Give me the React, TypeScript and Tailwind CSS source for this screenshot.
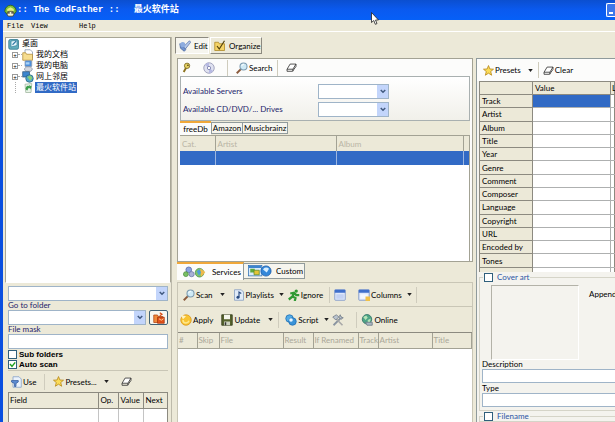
import type { ReactNode } from "react"
import { clsx } from "clsx"

const cjk = "font-['Liberation_Sans','Noto_Sans_CJK_SC',sans-serif]"

/* ---------- icons ---------- */

const Icon = ({ children, className = "size-3" }: { children: ReactNode; className?: string }) => (
  <svg viewBox="0 0 16 16" className={clsx("shrink-0", className)} aria-hidden="true">
    {children}
  </svg>
)

const StarIcon = () => (
  <Icon className="size-[11px]">
    <path
      d="M8 .8l2 5 5.3.3-4.1 3.4 1.4 5.4L8 11.9l-4.6 3 1.4-5.4L.7 6.1 6 5.8z"
      fill="#fbdc58"
      stroke="#b98a1c"
      strokeWidth="1.2"
    />
  </Icon>
)

const EraserIcon = () => (
  <Icon className="size-[11px]">
    <path d="M6 3h8.5L10 10.5H1.5z" fill="#fff" stroke="#333" strokeWidth="1.2" />
    <path d="M1.5 10.5v3H9.5l5-7V3M10 10.5v3" fill="none" stroke="#333" strokeWidth="1.2" />
  </Icon>
)

const SearchIcon = () => (
  <Icon>
    <path d="M1 15l5.5-5.5" stroke="#8a5a3c" strokeWidth="2.6" />
    <circle cx="10" cy="6" r="4.7" fill="#cfeaf6" stroke="#7c9bb0" strokeWidth="1.4" />
    <path d="M7.5 5.5a3 3 0 013-2.5" stroke="#fff" fill="none" strokeWidth="1.3" />
  </Icon>
)

const KeyIcon = () => (
  <Icon className="h-[11px] w-[9px]">
    <path d="M3 16l5-9" stroke="#8d7420" strokeWidth="3.4" />
    <circle cx="9" cy="5" r="4.8" fill="#e3cf62" stroke="#6f5d1d" strokeWidth="1.3" />
    <circle cx="10.5" cy="4" r="1.5" fill="#5d4c14" />
  </Icon>
)

const DiscIcon = () => (
  <Icon>
    <circle cx="8" cy="8" r="7" fill="#dfe1f0" stroke="#8d8fae" />
    <path d="M8 8L2.5 4A7 7 0 018 1zM8 8l5.6 4A7 7 0 018 15z" fill="#b6b9e2" />
    <circle cx="8" cy="8" r="2.2" fill="#fff" stroke="#6f73a4" />
  </Icon>
)

const PencilCheckIcon = () => (
  <Icon>
    <path d="M1 5l5 1 3 7-2 2-5-4z" fill="#6f93cf" stroke="#48659e" />
    <path d="M6 9l8-8 1.5 2-7 9z" fill="#b6c9ea" stroke="#5471a8" />
    <circle cx="5" cy="6" r="3.4" fill="#8dacdf" />
  </Icon>
)

const OrganizeIcon = () => (
  <Icon>
    <path d="M1 3h5l1 2h7v9H1z" fill="#f4d367" stroke="#a9831f" />
    <path d="M4 8l3 4 7-11" fill="none" stroke="#53420e" strokeWidth="1.6" />
  </Icon>
)

const AppIcon = () => (
  <Icon className="size-[13px]">
    <path d="M1 9a7 7.5 0 0114 0l-2 3H3z" fill="#7ec13c" stroke="#2d5e16" />
    <path d="M4 6l4-2 4 2v3H4z" fill="#e6ef7f" />
    <rect x="4" y="9" width="8" height="6" rx="2" fill="#f2f2d6" stroke="#433c1d" />
    <path d="M5 11h2m2 0h2" stroke="#222" strokeWidth="1.4" />
  </Icon>
)

const DesktopIcon = () => (
  <Icon>
    <rect x="1" y="2" width="13" height="13" rx="2" fill="#64aebd" stroke="#2c7388" />
    <path d="M4 4l8-1v7l-8 2z" fill="#e6f6fa" stroke="#3b87a0" />
    <path d="M6 9l5-5" stroke="#3178a4" strokeWidth="1.5" />
  </Icon>
)

const DocumentsIcon = () => (
  <Icon>
    <path d="M4 1h7l3 3v8H4z" fill="#fff" stroke="#8090a8" />
    <path d="M1 5h4l1 2h8v8H1z" fill="#f6dd90" stroke="#b08a33" />
  </Icon>
)

const ComputerIcon = () => (
  <Icon>
    <rect x="4" y="1" width="9" height="8" rx="1" fill="#4c8fdc" stroke="#8f99ac" />
    <path d="M5 3h5v3H5z" fill="#a8d2f8" />
    <path d="M3 12l3-3h5l3 3-2 3H5z" fill="#d3d7df" stroke="#8a90a0" />
  </Icon>
)

const NetworkIcon = () => (
  <Icon>
    <rect x="1" y="1" width="9" height="7" fill="#3d86cf" stroke="#31597d" />
    <circle cx="10" cy="10" r="5" fill="#4ea5c8" stroke="#27617f" />
    <path d="M7 8l4-2 3 3-3 4z" fill="#8ccf73" />
  </Icon>
)

const RecycleIcon = () => (
  <Icon>
    <path d="M4 3l9-1-1 12H5z" fill="#e9f3e8" stroke="#9db39c" />
    <path d="M6 11a3 3 0 014-5l-1-2 4 2-2 4-1-2a2 2 0 00-2 3z" fill="#3da04c" />
  </Icon>
)

const FolderGoIcon = () => (
  <Icon>
    <path d="M1 4h5l1 2h6v8H1z" fill="#f08a3c" stroke="#b2410f" />
    <path d="M6 7h9v8H6z" fill="#e2531c" stroke="#a3340c" />
    <path d="M9 1l3 2-3 2M10.500 9v4" fill="none" stroke="#d9480f" strokeWidth="1.6" />
    <path d="M8 9l3 2 3-2" fill="none" stroke="#ffd9a8" strokeWidth="1.200" />
  </Icon>
)

const FilterPageIcon = () => (
  <Icon>
    <path d="M4 1h8l3 3v11H4z" fill="#eaf2fc" stroke="#7e9cc6" />
    <path d="M2 6h9v2L8 10v4H6v-4L2 8z" fill="#5b8ad0" stroke="#375f9f" />
  </Icon>
)

const PlaylistIcon = () => (
  <Icon>
    <path d="M2 1h9l3 3v11H2z" fill="#e0ebf8" stroke="#7f98bd" />
    <path d="M8 11V4l3 2" fill="none" stroke="#27497f" strokeWidth="1.5" />
    <circle cx="6.6" cy="11" r="2" fill="#27497f" />
  </Icon>
)

const RunnerIcon = () => (
  <Icon>
    <circle cx="11" cy="2.8" r="2.2" fill="#2f9a33" />
    <path d="M3 6l5-1 3 3h4M8 5l-2 5 4 2-1 4M6 10l-5 4" fill="none" stroke="#2f9a33" strokeWidth="3" />
  </Icon>
)

const WindowIcon = ({ accent = false }: { accent?: boolean }) => (
  <Icon>
    <rect x="1" y="1" width="14" height="14" rx="1" fill="#dfe8fb" stroke="#6f8bc4" />
    <path d="M1 1h14v4H1z" fill="#3f6fcb" />
    <path d="M3 7h10v6H3z" fill={accent ? "#f4f8ff" : "#c3d2f4"} />
    {accent && <path d="M10 10h6v6h-6z" fill="#f1c148" />}
  </Icon>
)

const ApplyIcon = () => (
  <Icon>
    <circle cx="8" cy="8" r="7" fill="#f8c433" stroke="#d8941a" />
    <path d="M4 8a4 4 0 004 4 4.500 4.500 0 004-3" fill="none" stroke="#ffe88c" strokeWidth="2" />
    <path d="M1 1l7 2-4 4z" fill="#fff3c4" />
  </Icon>
)

const SaveIcon = () => (
  <Icon>
    <path d="M1 1h14v14H1z" fill="#56622d" stroke="#2e3616" />
    <path d="M4 1h8v6H4z" fill="#f5f6ec" />
    <path d="M4 10h8v5H4z" fill="#cdd2c0" />
    <path d="M5 11h2v4H5z" fill="#333" />
  </Icon>
)

const ScriptIcon = () => (
  <Icon>
    <circle cx="6" cy="6" r="5" fill="#52abe6" stroke="#1d6cb0" />
    <circle cx="10" cy="10" r="5" fill="#3a93d8" stroke="#1d6cb0" />
    <circle cx="8" cy="8" r="2.4" fill="#e9f6ff" />
  </Icon>
)

const ToolsIcon = () => (
  <Icon>
    <path d="M2 15L13 4" stroke="#8a94a0" strokeWidth="2.4" />
    <path d="M14 15L5 6" stroke="#a8a8a8" strokeWidth="2.2" />
    <path d="M1 4l5-3 3 3-4 4zM11 1l1 3 3 1-3 2-3-3z" fill="#b9c3cf" stroke="#6f7883" />
  </Icon>
)

const GlobeIcon = () => (
  <Icon>
    <circle cx="8" cy="7" r="6.3" fill="#4fa587" stroke="#2b6c62" />
    <path d="M3 4l4-2 2 3-3 3zM9 8l4-2-1 5-3 1z" fill="#b6e4b8" />
    <path d="M6 11h9v4H8z" fill="#a9b7c4" stroke="#66737f" />
  </Icon>
)

const ServicesIcon = () => (
  <svg viewBox="0 0 32 16" className="h-3 w-[23px] shrink-0" aria-hidden="true">
    <circle cx="8" cy="5" r="4" fill="#8aa2e0" stroke="#4f66a8" />
    <circle cx="4" cy="11" r="3.4" fill="#79bf64" stroke="#4a8b3e" />
    <circle cx="12" cy="11" r="3.6" fill="#a9b2d6" stroke="#6a75a6" />
    <circle cx="23" cy="9" r="6" fill="#7ec46a" stroke="#3f8845" />
    <path d="M24 3l7 5-6 7z" fill="#f0b94b" />
    <path d="M19 7l4-3 2 5-3 4z" fill="#4f9bd8" />
  </svg>
)

const CustomIcon = () => (
  <svg viewBox="0 0 32 16" className="h-3 w-6 shrink-0" aria-hidden="true">
    <rect x=".5" y=".5" width="18" height="14" fill="#d9ecfb" stroke="#2e6fb3" />
    <path d="M1 1h17v3H1z" fill="#3c84cf" />
    <path d="M3 5h6v5H3z" fill="#5daa3e" />
    <path d="M8 7h7v6H8z" fill="#e4c437" stroke="#5b8a26" />
    <circle cx="24" cy="8" r="6.8" fill="#3287da" stroke="#1a58a5" />
    <path d="M20 6a5 5 0 018-1l-3 5z" fill="#d5edff" />
  </svg>
)

/* ---------- small controls ---------- */

const Caret = ({ label }: { label: string }) => (
  <button type="button" aria-label={label} className="flex w-3 justify-center">
    <svg viewBox="0 0 6 4" className="h-[3px] w-[5px]" aria-hidden="true">
      <path d="M0 0h6L3 4z" fill="#222" />
    </svg>
  </button>
)

const Separator = () => <div className="h-4 w-px bg-[#cfccbd]" />

const ToolButton = ({ icon, label, text = true }: { icon: ReactNode; label: string; text?: boolean }) => (
  <button type="button" aria-label={label} className="flex items-center gap-px whitespace-nowrap">
    {icon}
    {text && label}
  </button>
)

const Combo = ({ id, label }: { id: string; label?: string }) => (
  <div className="relative flex h-[15px] flex-1 border border-[#9fb4c8] bg-white">
    <select id={id} aria-label={label} className="w-full appearance-none bg-transparent outline-none">
      <option></option>
    </select>
    <span className="pointer-events-none absolute inset-y-0 right-0 flex w-[11px] items-center justify-center bg-[#c3d5fb]">
      <svg viewBox="0 0 8 6" className="h-[5px] w-[6px]" aria-hidden="true">
        <path d="M1 1l3 3 3-3" fill="none" stroke="#41597f" strokeWidth="2" />
      </svg>
    </span>
  </div>
)

const Check = ({ id, checked = false }: { id: string; checked?: boolean }) => (
  <span className="relative flex size-[9px] shrink-0">
    <input
      id={id}
      type="checkbox"
      defaultChecked={checked}
      className="peer size-full appearance-none border border-[#2f5f7c] bg-white"
    />
    <svg
      viewBox="0 0 9 9"
      className="pointer-events-none absolute inset-0 hidden peer-checked:block"
      aria-hidden="true"
    >
      <path d="M2 4l2 2.4L7.2 2.4" fill="none" stroke="#21a121" strokeWidth="1.5" />
    </svg>
  </span>
)

/* ---------- left side ---------- */

const folders = [
  { name: "我的文档", icon: <DocumentsIcon /> },
  { name: "我的电脑", icon: <ComputerIcon /> },
  { name: "网上邻居", icon: <NetworkIcon /> },
]

const FolderTree = () => (
  <div className={clsx("h-[246px] shrink-0 border border-[#a8a696] border-b-white bg-white pl-[2px] text-[8px]", cjk)}>
    <div className="flex h-[11px] items-center gap-[2px]">
      <DesktopIcon />
      桌面
    </div>
    <ul className="pl-1">
      {folders.map((folder) => (
        <li key={folder.name} className="flex h-[11px] items-center">
          <button
            type="button"
            aria-label={`Expand ${folder.name}`}
            className="flex size-[6px] items-center justify-center border border-[#9a9a9a] text-[6px] leading-none"
          >
            +
          </button>
          <span className="w-1 border-t border-dotted border-[#aaa]" />
          <span className="flex items-center gap-[2px]">
            {folder.icon}
            {folder.name}
          </span>
        </li>
      ))}
      <li className="flex h-[11px] items-center">
        <span className="ml-[3px] h-[11px] w-[7px] border-l border-dotted border-[#aaa]" />
        <span className="flex items-center gap-px">
          <RecycleIcon />
          <span className="bg-[#316ac5] px-px leading-[11px] text-white">最火软件站</span>
        </span>
      </li>
    </ul>
  </div>
)

const FilterPanel = () => (
  <div className="flex flex-1 flex-col overflow-hidden px-[3px] pt-[3px]">
    <div className="flex">
      <Combo id="drive" label="Drive" />
    </div>
    <label htmlFor="goto" className="leading-[9px] text-[#1d1d6b]">
      Go to folder
    </label>
    <div className="flex gap-[3px]">
      <Combo id="goto" />
      <button
        type="button"
        aria-label="Open folder"
        className="flex h-[15px] w-[19px] items-center justify-center rounded-[2px] border border-[#3f6176] bg-[#f7f6f0]"
      >
        <FolderGoIcon />
      </button>
    </div>
    <label htmlFor="mask" className="leading-[9px] text-[#1d1d6b]">
      File mask
    </label>
    <input id="mask" className="h-[15px] shrink-0 border border-[#9fb4c8] bg-white outline-none" />
    <div className="flex flex-col gap-px pt-px font-['Liberation_Sans',sans-serif] text-[8px] font-bold">
      <span className="flex items-center gap-[2px]">
        <Check id="sub" />
        <label htmlFor="sub" className="leading-[9px]">
          Sub folders
        </label>
      </span>
      <span className="flex items-center gap-[2px]">
        <Check id="auto" checked />
        <label htmlFor="auto" className="leading-[9px]">
          Auto scan
        </label>
      </span>
    </div>
    <div className="mt-px flex h-[22px] shrink-0 items-center border-t border-[#c9c6b6] pl-[2px]">
      <ToolButton icon={<FilterPageIcon />} label="Use" />
      <div className="mr-2 ml-2">
        <Separator />
      </div>
      <ToolButton icon={<StarIcon />} label="Presets..." />
      <div className="mr-2 ml-1 flex items-center gap-1">
        <Caret label="Preset list" />
      </div>
      <ToolButton icon={<EraserIcon />} label="Clear filter" text={false} />
    </div>
    <div className="flex flex-1 flex-col border-x border-t border-[#8c8a80] bg-white">
      <table className="w-full table-fixed border-collapse text-left">
        <thead>
          <tr className="h-[15px] bg-[#ece9d8]">
            <th className="border-r border-b border-[#8c8a80] pl-px font-normal">Field</th>
            <th className="w-5 border-r border-b border-[#8c8a80] pl-[2px] font-normal">Op.</th>
            <th className="w-[25px] border-r border-b border-[#8c8a80] pl-[2px] font-normal">Value</th>
            <th className="w-6 border-b border-[#8c8a80] pl-[2px] font-normal">Next</th>
          </tr>
        </thead>
        <tbody>
          <tr className="h-4">
            <td className="border-r border-[#c4c4c4]"></td>
            <td className="border-r border-[#c4c4c4]"></td>
            <td className="border-r border-[#c4c4c4]"></td>
            <td></td>
          </tr>
        </tbody>
      </table>
    </div>
  </div>
)

/* ---------- middle ---------- */

const LookupPanel = () => (
  <div className="flex h-[204px] shrink-0 flex-col border border-[#a3a294] bg-[#fcfcfb] px-[2px]">
    <div className="flex h-[17px] shrink-0 items-center pl-[2px]">
      <ToolButton icon={<KeyIcon />} label="Connect" text={false} />
      <div className="ml-3 flex">
        <ToolButton icon={<DiscIcon />} label="Disc" text={false} />
      </div>
      <div className="mr-2 ml-3">
        <Separator />
      </div>
      <ToolButton icon={<SearchIcon />} label="Search" />
      <div className="mr-2 ml-1">
        <Separator />
      </div>
      <ToolButton icon={<EraserIcon />} label="Clear results" text={false} />
    </div>
    <div className="grid h-[45px] shrink-0 grid-cols-[135px_71px] content-center items-center gap-y-[3px] border border-[#a9b0b0] bg-linear-to-b from-white to-[#f1f0ea] pt-[3px] pl-[2px] text-[#1d1d6b]">
      <label htmlFor="servers">Available Servers</label>
      <Combo id="servers" />
      <label htmlFor="drives">Available CD/DVD/... Drives</label>
      <Combo id="drives" />
    </div>
    <div role="tablist" className="flex h-[14px] shrink-0 items-end bg-[#ece9d8]">
      <button role="tab" aria-selected="true" className="h-[14px] w-[31px] border-t-2 border-[#f0a83a] bg-[#fcfcfb]">
        freeDb
      </button>
      <button role="tab" aria-selected="false" className="mb-px h-3 w-8 border border-[#919b9c] bg-[#f6f5ee]">
        Amazon
      </button>
      <button
        role="tab"
        aria-selected="false"
        className="mb-px h-3 border border-l-0 border-[#919b9c] bg-[#f6f5ee] px-px"
      >
        Musicbrainz
      </button>
    </div>
    <div className="flex-1 border-t border-r border-[#a3a294] bg-white">
      <table className="w-full table-fixed border-collapse text-left text-[#b9b5a5]">
        <thead>
          <tr className="h-[15px] bg-[#ece9d8]">
            <th className="w-[35px] border-r border-[#a3a294] pl-[2px] font-normal">Cat.</th>
            <th className="w-[121px] border-r border-[#a3a294] pl-[2px] font-normal">Artist</th>
            <th className="border-r border-[#a3a294] pl-[2px] font-normal">Album</th>
            <th className="w-[6px]"></th>
          </tr>
        </thead>
        <tbody>
          <tr className="h-[14px] bg-[#316ac5]">
            <td className="border-r border-[#9db7e0]"></td>
            <td className="border-r border-[#9db7e0]"></td>
            <td className="border-r border-[#9db7e0]"></td>
            <td></td>
          </tr>
        </tbody>
      </table>
    </div>
  </div>
)

const fileColumns = [
  { name: "#", width: "w-[19px]" },
  { name: "Skip", width: "w-[22px]" },
  { name: "File", width: "w-16" },
  { name: "Result", width: "w-[30px]" },
  { name: "If Renamed", width: "w-[45px]" },
  { name: "Track", width: "w-5" },
  { name: "Artist", width: "w-[54px]" },
  { name: "Title", width: "" },
]

const ServicesPanel = () => (
  <div className="flex flex-1 flex-col overflow-hidden">
    <div role="tablist" className="flex h-5 shrink-0 items-start">
      <button
        role="tab"
        aria-selected="true"
        className="flex h-[18px] w-[67px] items-center gap-[6px] border-t-2 border-r border-[#919b9c] border-t-[#f0a83a] bg-[#fcfcfb] pl-[6px]"
      >
        <ServicesIcon />
        Services
      </button>
      <button
        role="tab"
        aria-selected="false"
        className="mt-px flex h-4 items-center gap-1 border border-l-0 border-[#919b9c] bg-[#f6f5ee] pr-px pl-1"
      >
        <CustomIcon />
        Custom
      </button>
    </div>
    <div className="flex flex-1 flex-col border border-b-0 border-[#c9c6b6]">
      <div className="flex h-6 shrink-0 items-center border-b border-[#c9c6b6] pl-[5px]">
        <ToolButton icon={<SearchIcon />} label="Scan" />
        <div className="mr-1 ml-1 flex">
          <Caret label="Scan options" />
        </div>
        <ToolButton icon={<PlaylistIcon />} label="Playlists" />
        <div className="ml-[2px] flex">
          <Caret label="Playlist options" />
        </div>
        <ToolButton icon={<RunnerIcon />} label="Ignore" />
        <div className="mr-1 ml-[6px]">
          <Separator />
        </div>
        <ToolButton icon={<WindowIcon />} label="Window" text={false} />
        <div className="ml-3 flex">
          <ToolButton icon={<WindowIcon accent />} label="Columns" />
        </div>
        <div className="ml-[2px] flex">
          <Caret label="Column options" />
        </div>
        <Separator />
      </div>
      <div className="flex h-[25px] shrink-0 items-center pl-[2px]">
        <ToolButton icon={<ApplyIcon />} label="Apply" />
        <div className="ml-2 flex">
          <ToolButton icon={<SaveIcon />} label="Update" />
        </div>
        <div className="mr-[2px] ml-1 flex">
          <Caret label="Update options" />
        </div>
        <Separator />
        <div className="ml-[6px] flex">
          <ToolButton icon={<ScriptIcon />} label="Script" />
        </div>
        <div className="ml-[2px] flex">
          <Caret label="Script options" />
        </div>
        <ToolButton icon={<ToolsIcon />} label="Tools" text={false} />
        <div className="mr-1 ml-3">
          <Separator />
        </div>
        <ToolButton icon={<GlobeIcon />} label="Online" />
      </div>
      <div className="flex-1 border-t border-[#8c8a80] bg-white">
        <table className="w-full table-fixed border-collapse text-left text-[#aaa798]">
          <thead>
            <tr className="h-[15px] bg-[#ece9d8]">
              {fileColumns.map((column) => (
                <th
                  key={column.name}
                  className={clsx(
                    "overflow-hidden border-r border-b border-[#a3a294] pl-px font-normal whitespace-nowrap",
                    column.width
                  )}
                >
                  {column.name}
                </th>
              ))}
            </tr>
          </thead>
        </table>
      </div>
    </div>
  </div>
)

/* ---------- right side ---------- */

const tags = [
  "Track",
  "Artist",
  "Album",
  "Title",
  "Year",
  "Genre",
  "Comment",
  "Composer",
  "Language",
  "Copyright",
  "URL",
  "Encoded by",
  "Tones",
  "",
]

const TagPanel = () => (
  <div className="flex flex-1 flex-col overflow-hidden border-t border-l border-[#8f9a9c] bg-[#f4f3ee]">
    <div className="flex h-[22px] shrink-0 items-center bg-[#fcfcfb] pl-[6px]">
      <ToolButton icon={<StarIcon />} label="Presets" />
      <div className="mr-px ml-1 flex">
        <Caret label="Preset list" />
      </div>
      <Separator />
      <div className="ml-1 flex">
        <ToolButton icon={<EraserIcon />} label="Clear" />
      </div>
    </div>
    <div className="h-[191px] shrink-0 overflow-hidden pl-[2px]">
      <table className="h-[200px] w-full table-fixed border-collapse border border-[#8c8a80] bg-white text-left">
        <thead>
          <tr className="h-[13px] bg-[#ece9d8]">
            <th className="w-[53px] border-r border-b border-[#8c8a80]"></th>
            <th className="w-[78px] border-r border-b border-[#8c8a80] pl-[2px] font-normal">Value</th>
            <th className="border-b border-[#8c8a80] pl-px font-normal">L</th>
          </tr>
        </thead>
        <tbody>
          {tags.map((tag, i) => (
            <tr key={tag} className="h-[13px]">
              <th scope="row" className="border-r border-b border-[#8c8a80] bg-[#ece9d8] pl-[2px] font-normal">
                {tag}
              </th>
              <td className={clsx("border-r border-b border-[#aeb0b0]", i === 0 && "bg-[#316ac5]")}></td>
              <td className="border-b border-[#aeb0b0]"></td>
            </tr>
          ))}
        </tbody>
      </table>
    </div>
    <fieldset className="ml-[2px] h-[139px] shrink-0 border border-r-0 border-[#d5d4c8] pr-0 pl-[2px]">
      <legend className="ml-px flex items-center gap-1 px-px leading-[10px] text-[#2c56a5]">
        <Check id="cover" />
        <label htmlFor="cover">Cover art</label>
      </legend>
      <div className="flex items-start pt-[3px] pl-[9px]">
        <div className="h-[75px] w-[88px] border border-[#b3b2a8] border-r-white border-b-white" />
        <span className="pt-1 pl-[10px]">Append</span>
      </div>
      <label htmlFor="description" className="block leading-[9px]">
        Description
      </label>
      <input
        id="description"
        className="block h-[14px] w-full border border-r-0 border-[#9fb4c8] bg-white outline-none"
      />
      <label htmlFor="type" className="block leading-[10px]">
        Type
      </label>
      <input id="type" className="block h-[14px] w-full border border-r-0 border-[#9fb4c8] bg-white outline-none" />
    </fieldset>
    <fieldset className="ml-[2px] flex-1 border border-r-0 border-[#d5d4c8] pl-[2px]">
      <legend className="ml-px flex items-center gap-1 px-px leading-[10px] text-[#2c56a5]">
        <Check id="filename" />
        <label htmlFor="filename">Filename</label>
      </legend>
    </fieldset>
  </div>
)

const TitleBar = () => (
  <header className="relative flex h-5 shrink-0 items-center bg-linear-to-b from-[#0b4fd0] via-[#0a5af0] to-[#0660f8] pl-1 font-['Liberation_Mono','Noto_Sans_CJK_SC',monospace] text-[9px] font-bold text-white">
    <AppIcon />
    <h1 className="flex-1 whitespace-pre">
      :: The GodFather ::<span className="pl-[14px]">最火软件站</span>
    </h1>
    <button
      type="button"
      aria-label="Minimize"
      className="flex h-[14px] w-[9px] items-end rounded-l-[2px] border border-r-0 border-white bg-[#3d76ea] pb-[2px] pl-[2px]"
    >
      <span className="h-[2px] w-1 bg-white" />
    </button>
    <svg viewBox="0 0 8 13" className="absolute top-3 left-[371px] h-[13px] w-2" aria-hidden="true">
      <path d="M.5.5v10l2.3-2 1.5 3.8 1.7-.7L4.5 8h3z" fill="#fff" stroke="#222" strokeWidth=".8" />
    </svg>
  </header>
)

const App = () => {
  return (
    <div className="flex h-screen flex-col overflow-hidden bg-[#ece9d8] font-['Lato','Roboto',sans-serif] text-[8px] leading-[10px] text-black">
      <TitleBar />
      <div className="flex flex-1 flex-col overflow-hidden border-l-3 border-[#0a4fe0]">
        <nav className="flex h-3 shrink-0 items-center border-b border-white pl-1 font-['Liberation_Mono',monospace] text-[7px]">
          <button type="button" className="w-6 text-left">
            File
          </button>
          <button type="button" className="w-12 text-left">
            View
          </button>
          <button type="button">Help</button>
        </nav>
        <main className="flex flex-1 overflow-hidden pt-[5px] pl-[2px]">
          <aside className="flex w-[167px] shrink-0 flex-col border-r border-[#bdbaab]">
            <FolderTree />
            <FilterPanel />
          </aside>
          <section className="flex w-[301px] shrink-0 flex-col pl-[5px]">
            <div className="-ml-[2px] flex h-[21px] shrink-0 items-start gap-px">
              <button
                type="button"
                className="flex h-[17px] w-[34px] items-center gap-[3px] border border-[#8c8a80] border-r-white border-b-white bg-[#f6f5ee] pl-[3px]"
              >
                <PencilCheckIcon />
                Edit
              </button>
              <button
                type="button"
                className="flex h-[17px] w-[52px] items-center gap-[3px] border border-white border-r-[#8c8a80] border-b-[#8c8a80] pl-[3px]"
              >
                <OrganizeIcon />
                Organize
              </button>
            </div>
            <LookupPanel />
            <ServicesPanel />
          </section>
          <section className="flex flex-1 flex-col overflow-hidden pt-[21px] pl-[3px]">
            <TagPanel />
          </section>
        </main>
      </div>
    </div>
  )
}

export default App
